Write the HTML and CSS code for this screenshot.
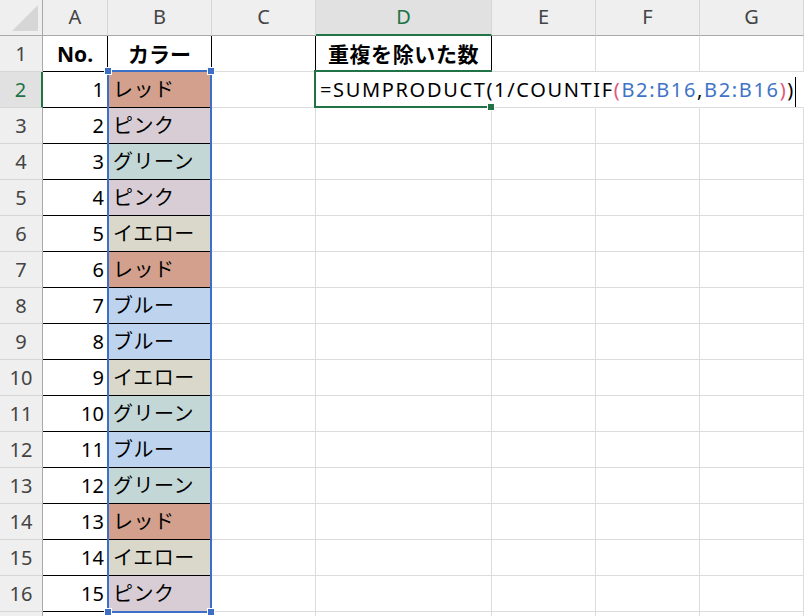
FILE: index.html
```html
<!DOCTYPE html>
<html lang="ja">
<head>
<meta charset="utf-8">
<title>Sheet</title>
<link rel="stylesheet" href="styles.css">
</head>
<body>
<div class="sheet">
  <div class="grid">
    <!-- header row -->
    <div class="corner"><svg width="42" height="35" viewBox="0 0 42 35"><polygon points="38,5 38,31 12,31" fill="#d6d6d6"/></svg></div>
    <div class="ch">A</div><div class="ch">B</div><div class="ch">C</div><div class="ch chs">D</div><div class="ch">E</div><div class="ch">F</div><div class="ch">G</div>

    <!-- row 1 -->
    <div class="rh">1</div>
    <div class="c t hd">No.</div><div class="c t hd">カラー</div><div class="c bl"></div><div class="c t hd wide">重複を除いた数</div><div class="c"></div><div class="c"></div><div class="c"></div>

    <!-- row 2 -->
    <div class="rh rhs">2</div>
    <div class="c t num">1</div><div class="c t col red">レッド</div><div class="c"></div>
    <div class="c edit">=SUMPRODUCT(1/COUNTIF<span class="pk">(</span><span class="bu">B2:B16</span>,<span class="bu">B2:B16</span><span class="pk">)</span>)<span class="caret"></span></div>
    <div class="c nr"></div><div class="c nr"></div><div class="c nr"></div>

    <div class="rh">3</div><div class="c t num">2</div><div class="c t col pink">ピンク</div><div class="c"></div><div class="c"></div><div class="c"></div><div class="c"></div><div class="c"></div>
    <div class="rh">4</div><div class="c t num">3</div><div class="c t col green">グリーン</div><div class="c"></div><div class="c"></div><div class="c"></div><div class="c"></div><div class="c"></div>
    <div class="rh">5</div><div class="c t num">4</div><div class="c t col pink">ピンク</div><div class="c"></div><div class="c"></div><div class="c"></div><div class="c"></div><div class="c"></div>
    <div class="rh">6</div><div class="c t num">5</div><div class="c t col yellow">イエロー</div><div class="c"></div><div class="c"></div><div class="c"></div><div class="c"></div><div class="c"></div>
    <div class="rh">7</div><div class="c t num">6</div><div class="c t col red">レッド</div><div class="c"></div><div class="c"></div><div class="c"></div><div class="c"></div><div class="c"></div>
    <div class="rh">8</div><div class="c t num">7</div><div class="c t col blue">ブルー</div><div class="c"></div><div class="c"></div><div class="c"></div><div class="c"></div><div class="c"></div>
    <div class="rh">9</div><div class="c t num">8</div><div class="c t col blue">ブルー</div><div class="c"></div><div class="c"></div><div class="c"></div><div class="c"></div><div class="c"></div>
    <div class="rh">10</div><div class="c t num">9</div><div class="c t col yellow">イエロー</div><div class="c"></div><div class="c"></div><div class="c"></div><div class="c"></div><div class="c"></div>
    <div class="rh">11</div><div class="c t num">10</div><div class="c t col green">グリーン</div><div class="c"></div><div class="c"></div><div class="c"></div><div class="c"></div><div class="c"></div>
    <div class="rh">12</div><div class="c t num">11</div><div class="c t col blue">ブルー</div><div class="c"></div><div class="c"></div><div class="c"></div><div class="c"></div><div class="c"></div>
    <div class="rh">13</div><div class="c t num">12</div><div class="c t col green">グリーン</div><div class="c"></div><div class="c"></div><div class="c"></div><div class="c"></div><div class="c"></div>
    <div class="rh">14</div><div class="c t num">13</div><div class="c t col red">レッド</div><div class="c"></div><div class="c"></div><div class="c"></div><div class="c"></div><div class="c"></div>
    <div class="rh">15</div><div class="c t num">14</div><div class="c t col yellow">イエロー</div><div class="c"></div><div class="c"></div><div class="c"></div><div class="c"></div><div class="c"></div>
    <div class="rh">16</div><div class="c t num">15</div><div class="c t col pink">ピンク</div><div class="c"></div><div class="c"></div><div class="c"></div><div class="c"></div><div class="c"></div>
    <div class="rh"></div><div class="c"></div><div class="c"></div><div class="c"></div><div class="c"></div><div class="c"></div><div class="c"></div><div class="c"></div>
  </div>

  <div class="range"></div>
  <div class="rhandle h1"></div><div class="rhandle h2"></div><div class="rhandle h3"></div><div class="rhandle h4"></div>
  <div class="active"></div>
  <div class="fill"></div>
</div>
</body>
</html>
```

FILE: styles.css
```css
html, body {
  margin: 0;
  padding: 0;
  background: #fff;
  overflow: hidden;
}

.sheet {
  position: relative;
  width: 804px;
  height: 616px;
  overflow: hidden;
  font-family: "Noto Sans", "Noto Sans CJK JP", sans-serif;
  font-size: 20px;
  color: #000;
}

.grid {
  display: grid;
  grid-template-columns: 43px 65px 104px 104px 176px 104px 104px 104px;
  grid-template-rows: 36px repeat(17, 36px);
}

.grid > div {
  box-sizing: border-box;
  line-height: 34px;
  white-space: nowrap;
}

.corner {
  background: #efefef;
  border-right: 1px solid #a9a9a9;
  border-bottom: 1px solid #a9a9a9;
}
.corner svg { display: block; }

.ch {
  background: #efefef;
  color: #444;
  text-align: center;
  border-right: 1px solid #d6d6d6;
  border-bottom: 1px solid #a9a9a9;
  font-size: 20px;
}
.chs {
  background: #e1e1e1;
  color: #217346;
  border-bottom: 2px solid #217346;
}

.rh {
  background: #efefef;
  color: #444;
  text-align: center;
  border-right: 1px solid #a9a9a9;
  border-bottom: 1px solid #d6d6d6;
  padding-top: 1px;
}
.rhs {
  background: #e1e1e1;
  color: #217346;
  border-right: 2px solid #217346;
}

.c {
  border-right: 1px solid #dcdcdc;
  border-bottom: 1px solid #dcdcdc;
  padding-top: 1px;
}
.c.t {
  border-right-color: #000;
  border-bottom-color: #000;
}
.c.bl { border-right-color: #000; }
.c.nr { border-right-color: transparent; }

.hd {
  font-weight: bold;
  text-align: center;
  font-size: 21px;
}
.wide { letter-spacing: 0.6px; }
.num {
  text-align: right;
  padding-right: 3px;
}
.col {
  padding-left: 5px;
  letter-spacing: 0.5px;
}
.red { background: #d2a08d; }
.pink { background: #d8cdd4; }
.green { background: #c3d7d6; }
.yellow { background: #dad8cb; }
.blue { background: #bed3ee; }

.edit {
  position: relative;
  z-index: 2;
  padding-left: 4px;
  overflow: visible;
  letter-spacing: 1.65px;
  border-right-color: transparent !important;
}
.pk { color: #e0587a; }
.bu { color: #3f73c8; }
.caret {
  display: inline-block;
  width: 1px;
  height: 30px;
  background: #000;
  margin-left: 0;
  vertical-align: middle;
}

.range {
  position: absolute;
  left: 107px;
  top: 70px;
  width: 105px;
  height: 543px;
  box-sizing: border-box;
  border: 2px solid #3d6fc6;
}
.rhandle {
  position: absolute;
  width: 6px;
  height: 6px;
  background: #3d6fc6;
  border: 1px solid #fff;
}
.h1 { left: 104px; top: 67px; }
.h2 { left: 207px; top: 67px; }
.h3 { left: 104px; top: 608px; }
.h4 { left: 207px; top: 608px; }

.active {
  position: absolute;
  left: 314px;
  top: 70px;
  width: 178px;
  height: 38px;
  box-sizing: border-box;
  border: 2px solid #217346;
  border-right: none;
  z-index: 3;
}
.fill {
  position: absolute;
  left: 487px;
  top: 103px;
  width: 6px;
  height: 6px;
  background: #217346;
  border: 1px solid #fff;
  z-index: 4;
}
```
